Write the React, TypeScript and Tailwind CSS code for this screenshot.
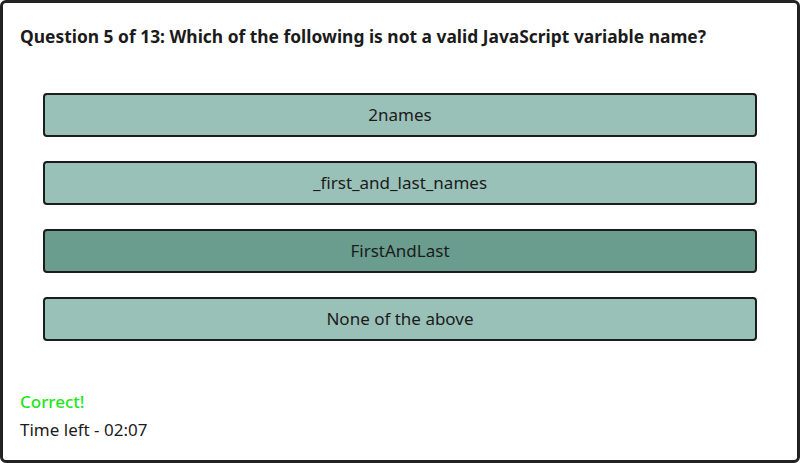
const options = ['2names', '_first_and_last_names', 'FirstAndLast', 'None of the above'];

export default function App() {
  const selected = 'FirstAndLast';
  return (
    <div className="w-[800px] h-[463px] bg-white">
      <div
        className="w-full h-full border-[3px] border-[#222] rounded-md px-[17px] pt-[21px] text-[#1b1b1b]"
        style={{ fontFamily: '"Noto Sans", "Open Sans", sans-serif' }}
      >
        <h1 className="text-[17.4px] leading-[24px] font-bold">
          Question 5 of 13: Which of the following is not a valid JavaScript variable name?
        </h1>
        <div className="mt-[45px] mx-[23px] flex flex-col gap-[24px]">
          {options.map((o) => (
            <button
              key={o}
              className={
                o === selected
                  ? 'h-[44px] border-2 border-[#1c1c1c] rounded-[4px] bg-[#6a9d8e] text-[17px] text-[#1b1b1b]'
                  : 'h-[44px] border-2 border-[#1c1c1c] rounded-[4px] bg-[#9ac1b7] text-[17px] text-[#1b1b1b]'
              }
            >
              {o}
            </button>
          ))}
        </div>
        <div className="mt-[47px] text-[17px] leading-[28px]">
          <div className="text-[#1ee619] font-medium">Correct!</div>
          <div>Time left - 02:07</div>
        </div>
      </div>
    </div>
  );
}
